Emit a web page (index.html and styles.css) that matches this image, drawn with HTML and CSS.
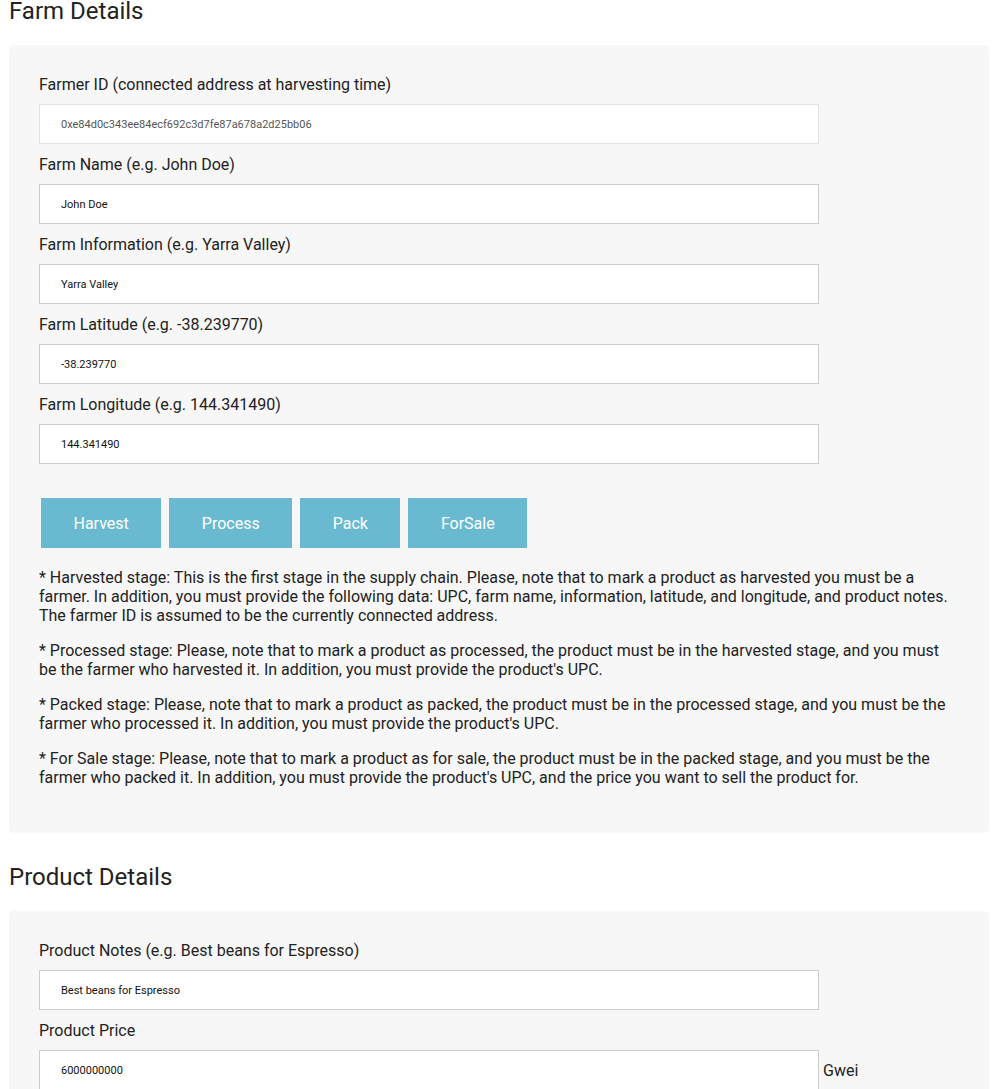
FILE: index.html
```html
<!DOCTYPE html>
<html>
<head>
<meta charset="utf-8">
<title>Farm Details</title>
<link rel="stylesheet" href="styles.css">
</head>
<body>
<div class="page">
  <h2 class="section-title">Farm Details</h2>
  <div class="panel">
    <label class="field-label">Farmer ID (connected address at harvesting time)</label>
    <input class="field-input readonly" type="text" value="0xe84d0c343ee84ecf692c3d7fe87a678a2d25bb06" readonly>
    <label class="field-label">Farm Name (e.g. John Doe)</label>
    <input class="field-input" type="text" value="John Doe">
    <label class="field-label">Farm Information (e.g. Yarra Valley)</label>
    <input class="field-input" type="text" value="Yarra Valley">
    <label class="field-label">Farm Latitude (e.g. -38.239770)</label>
    <input class="field-input" type="text" value="-38.239770">
    <label class="field-label">Farm Longitude (e.g. 144.341490)</label>
    <input class="field-input" type="text" value="144.341490">
    <div class="actions">
      <button class="btn">Harvest</button>
      <button class="btn">Process</button>
      <button class="btn">Pack</button>
      <button class="btn">ForSale</button>
    </div>
    <p class="note">* Harvested stage: This is the first stage in the supply chain. Please, note that to mark a product as harvested you must be a farmer. In addition, you must provide the following data: UPC, farm name, information, latitude, and longitude, and product notes. The farmer ID is assumed to be the currently connected address.</p>
    <p class="note">* Processed stage: Please, note that to mark a product as processed, the product must be in the harvested stage, and you must be the farmer who harvested it. In addition, you must provide the product's UPC.</p>
    <p class="note">* Packed stage: Please, note that to mark a product as packed, the product must be in the processed stage, and you must be the farmer who processed it. In addition, you must provide the product's UPC.</p>
    <p class="note">* For Sale stage: Please, note that to mark a product as for sale, the product must be in the packed stage, and you must be the farmer who packed it. In addition, you must provide the product's UPC, and the price you want to sell the product for.</p>
  </div>

  <h2 class="section-title">Product Details</h2>
  <div class="panel">
    <label class="field-label">Product Notes (e.g. Best beans for Espresso)</label>
    <input class="field-input" type="text" value="Best beans for Espresso">
    <label class="field-label">Product Price</label>
    <div class="price-row">
      <input class="field-input" type="text" value="6000000000">
      <span class="unit">Gwei</span>
    </div>
  </div>
</div>
</body>
</html>
```

FILE: styles.css
```css
html, body {
  margin: 0;
  padding: 0;
  background: #ffffff;
}

body {
  font-family: Roboto, "Liberation Sans", Arial, sans-serif;
  color: #222222;
}

.page {
  padding: 0 12px 0 9px;
}

.section-title {
  font-size: 24px;
  font-weight: 400;
  line-height: 22px;
  margin: 0 0 23px 0;
  color: #222222;
}

.panel {
  background: #f7f7f7;
  border-radius: 5px;
  padding: 29px 30px 30px 30px;
  margin-bottom: 33px;
}

.field-label {
  display: block;
  font-size: 16px;
  line-height: 20px;
  padding-top: 1px;
  margin: 10px 0 9px 0;
  color: #222222;
}

.panel > .field-label:first-child {
  margin-top: 0;
}

.field-input {
  display: block;
  box-sizing: border-box;
  width: 780px;
  height: 40px;
  margin: 0;
  padding: 1px 21px 0 21px;
  border: 1px solid #cccccc;
  background: #ffffff;
  font-family: Roboto, "Liberation Sans", Arial, sans-serif;
  font-size: 11px;
  color: #111111;
  outline: none;
}

.field-input.readonly {
  border-color: #e3e3e3;
  color: #555555;
}

.actions {
  display: flex;
  gap: 8px;
  margin: 34px 0 20px 2px;
}

.btn {
  height: 50px;
  padding: 0 32.5px;
  border: none;
  background: #69bad1;
  color: #ffffff;
  font-family: Roboto, "Liberation Sans", Arial, sans-serif;
  font-size: 16px;
  cursor: pointer;
}

.note {
  font-size: 16px;
  line-height: 19px;
  margin: 16px 0;
  color: #222222;
}

.price-row {
  display: flex;
  align-items: center;
  gap: 4px;
}

.unit {
  font-size: 16px;
  color: #222222;
}
```
